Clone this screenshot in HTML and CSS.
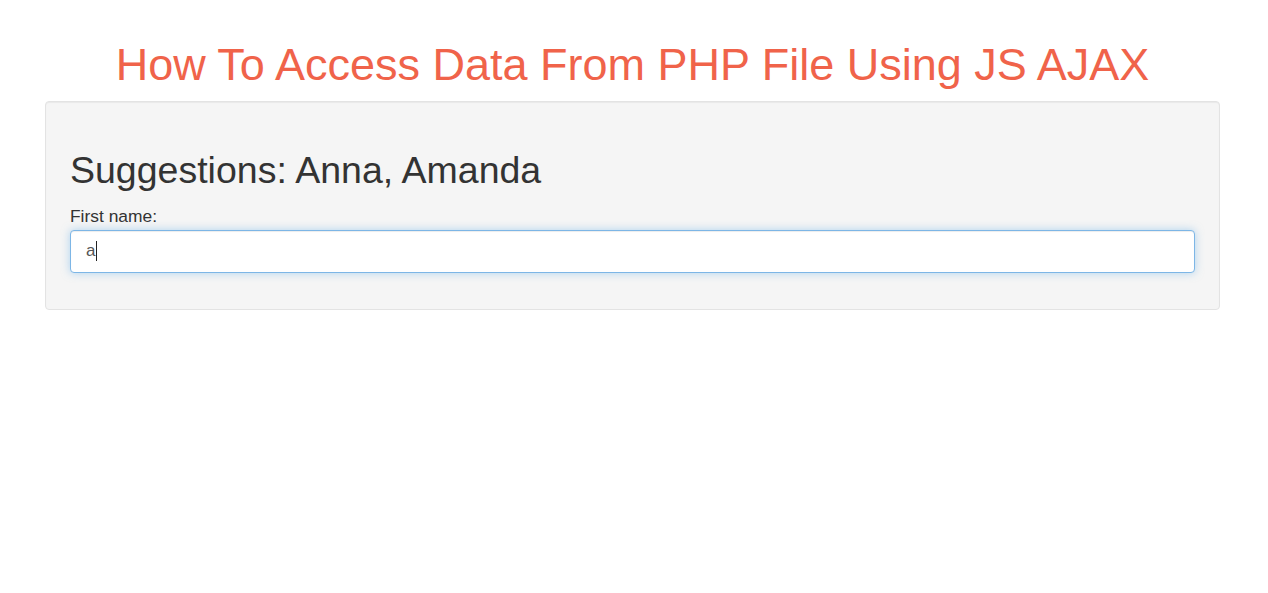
FILE: index.html
```html
<!DOCTYPE html>
<html lang="en">
<head>
<meta charset="utf-8">
<title>How To Access Data From PHP File Using JS AJAX</title>
<link rel="stylesheet" href="styles.css">
</head>
<body>
<div class="container">
  <h1 class="title">How To Access Data From PHP File Using JS AJAX</h1>
  <div class="well">
    <h2 class="suggest">Suggestions: <span>Anna, Amanda</span></h2>
    <form class="form-group">
      <label class="label">First name:</label>
      <div class="form-control"><span class="val">a</span><span class="caret"></span></div>
    </form>
  </div>
</div>
</body>
</html>
```

FILE: styles.css
```css
* { box-sizing: border-box; }
html, body { margin: 0; padding: 0; background: #fff; }
body {
  font-family: "Liberation Sans", Arial, sans-serif;
  color: #333;
}
.container {
  width: 1175px;
  margin-left: 45px;
  padding-top: 40px;
}
.title {
  margin: 0 0 11px;
  font-size: 45px;
  font-weight: 400;
  line-height: 1.1;
  text-align: center;
  color: #f0634a;
}
.well {
  background: #f5f5f5;
  border: 1px solid #e3e3e3;
  border-radius: 4px;
  box-shadow: inset 0 1px 1px rgba(0,0,0,0.05);
  padding: 24px;
}
.suggest {
  margin: 24px 0 13px;
  font-size: 37.5px;
  font-weight: 400;
  line-height: 1.1;
  color: #333;
}
.form-group { margin: 0 0 12px; }
.label {
  display: block;
  font-size: 17.4px;
  line-height: 24px;
  margin-bottom: 2px;
}
.form-control {
  display: flex;
  align-items: center;
  height: 43px;
  padding: 0 15px;
  font-size: 17px;
  color: #555;
  background: #fff;
  border: 1px solid #7db6e6;
  border-radius: 4px;
  box-shadow: inset 0 1px 1px rgba(0,0,0,.075), 0 0 8px rgba(102,175,233,.5);
}
.caret {
  display: inline-block;
  width: 1px;
  height: 20px;
  background: #222;
  margin-left: 1px;
}
```
